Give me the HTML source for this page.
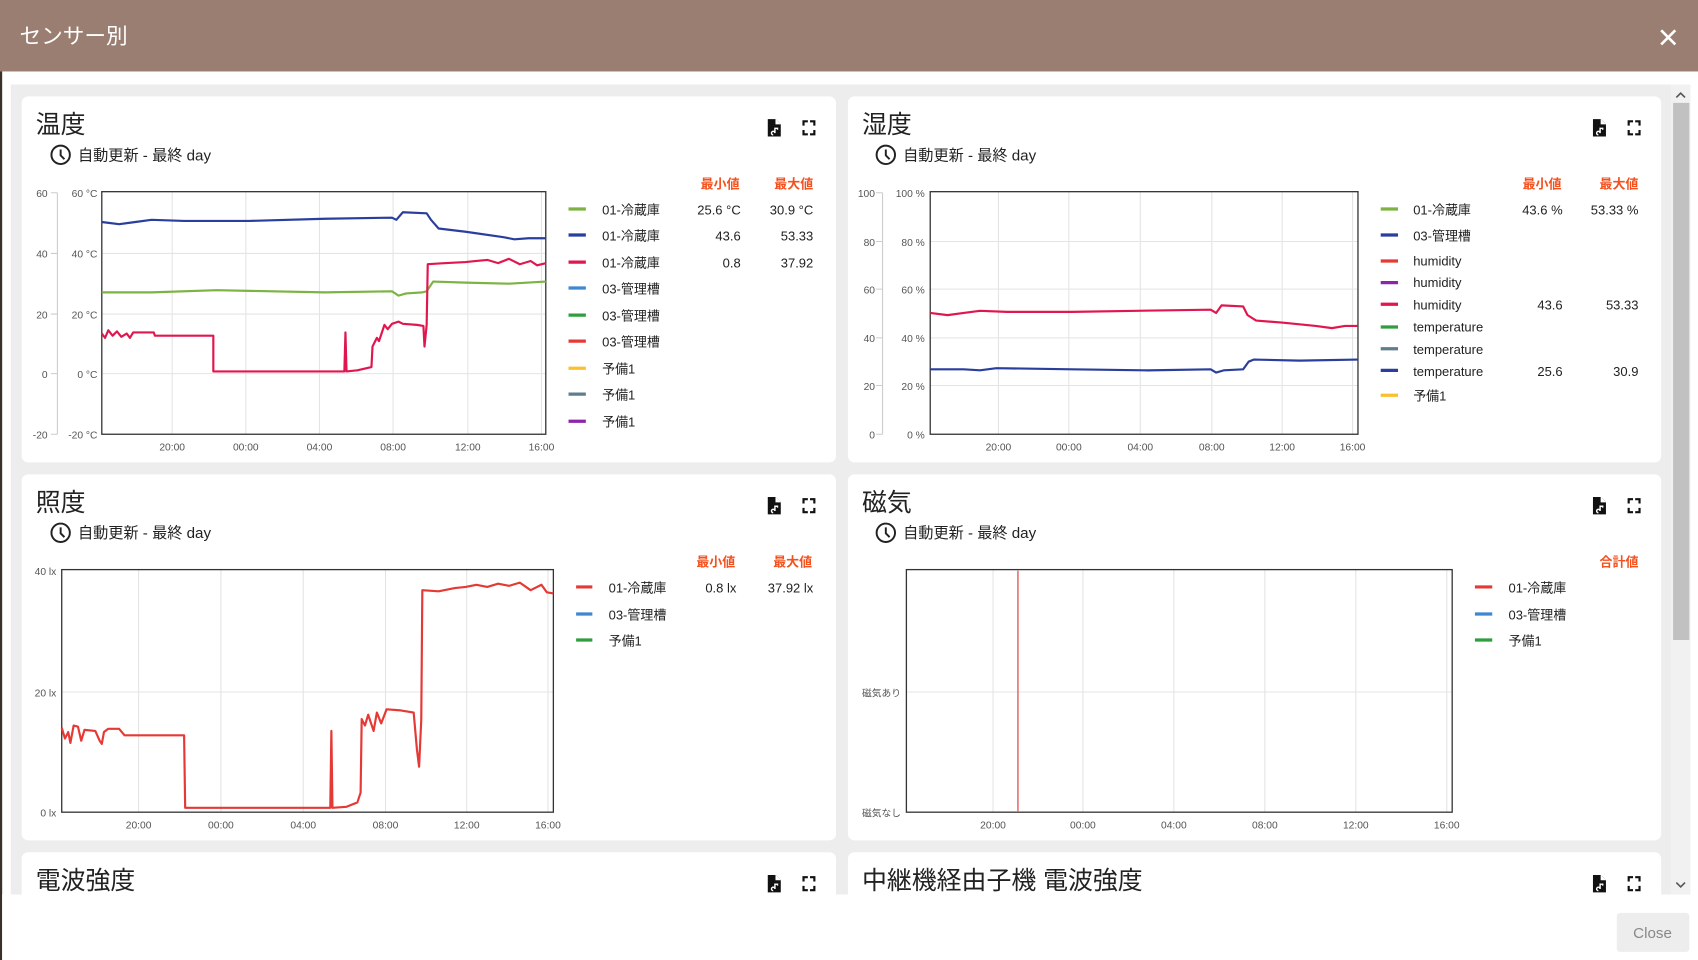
<!DOCTYPE html>
<html><head><meta charset="utf-8"><style>
html,body{margin:0;padding:0;background:#fff;overflow:hidden}
svg{display:block}
text{font-family:"Liberation Sans","Noto Sans CJK JP",sans-serif}
.ttl{font-size:23px;fill:#222}
.sub{font-size:14px;fill:#222}
.ax{font-size:9.5px;fill:#555}
.lg{font-size:12px;fill:#222}
.lh{font-size:12px;fill:#f4511e;font-weight:bold}
.grid{stroke:#e4e4e4;stroke-width:1;fill:none}
</style></head><body>
<svg width="1698" height="960" viewBox="0 0 1568 886.5" xmlns="http://www.w3.org/2000/svg">
<defs>
<g id="clk"><circle cx="0" cy="0" r="8.5" fill="none" stroke="#222" stroke-width="1.8"/><path d="M0 -5V0.5L3.5 4" fill="none" stroke="#222" stroke-width="1.8"/></g>
<g id="ico"><path d="M-6 -8H1.5L6 -3.5V8H-6Z" fill="#111"/><path d="M1.5 -8V-3.5H6" fill="#fff" stroke="#fff" stroke-width="0.8"/><path d="M-1 6.5 A1.6 1.6 0 1 1 0.6 4.9V0.5H3V1.8" fill="none" stroke="#fff" stroke-width="1.3"/>
<path d="M27 -2V-6H31M33 -6H37V-2M37 2V6H33M31 6H27V2" fill="none" stroke="#111" stroke-width="2"/></g>
</defs>
<rect width="1568" height="887" fill="#fff"/>
<rect width="1568" height="66" fill="#9a7e71"/>
<text x="18" y="40" style="font-size:20px;fill:#fff">センサー別</text>
<path d="M1534 28L1547 41M1547 28L1534 41" stroke="#fff" stroke-width="2.4"/>
<rect x="10" y="78" width="1533" height="748" fill="#ededed"/>
<rect x="1543" y="78" width="18" height="748" fill="#f1f1f1"/>
<rect x="1545" y="95" width="15" height="496" fill="#c1c1c1"/>
<path d="M1548 90L1552 86L1556 90" stroke="#555" stroke-width="1.5" fill="none"/>
<path d="M1548 815L1552 819L1556 815" stroke="#555" stroke-width="1.5" fill="none"/>
<rect x="0" y="66" width="2" height="821" fill="#3b2f2a"/>

<rect x="20" y="89" width="752" height="338" rx="6" fill="#fff"/>
<rect x="783" y="89" width="751" height="338" rx="6" fill="#fff"/>
<rect x="20" y="438" width="752" height="338" rx="6" fill="#fff"/>
<rect x="783" y="438" width="751" height="338" rx="6" fill="#fff"/>
<rect x="20" y="787" width="752" height="50" rx="6" fill="#fff"/>
<rect x="783" y="787" width="751" height="50" rx="6" fill="#fff"/>

<text x="33" y="123" class="ttl">温度</text>
<use href="#clk" x="56" y="143"/><text x="72" y="148" class="sub">自動更新 - 最終 day</text>
<use href="#ico" x="715" y="118"/>
<g class="grid"><path d="M94 234H504M94 290H504M94 345H504M159 177V401M227 177V401M295 177V401M363 177V401M432 177V401M500 177V401"/></g>
<path d="M53 178V401M47 178H53M47 234H53M47 290H53M47 345H53M47 401H53" stroke="#ccc" fill="none"/>
<rect x="94" y="177" width="410" height="224" fill="none" stroke="#333" stroke-width="1.2"/>
<g class="ax" text-anchor="end"><text x="44" y="182">60</text><text x="44" y="238">40</text><text x="44" y="294">20</text><text x="44" y="349">0</text><text x="44" y="405">-20</text>
<text x="90" y="182">60 °C</text><text x="90" y="238">40 °C</text><text x="90" y="294">20 °C</text><text x="90" y="349">0 °C</text><text x="90" y="405">-20 °C</text></g>
<g class="ax" text-anchor="middle"><text x="159" y="416">20:00</text><text x="227" y="416">00:00</text><text x="295" y="416">04:00</text><text x="363" y="416">08:00</text><text x="432" y="416">12:00</text><text x="500" y="416">16:00</text></g>
<g fill="none" stroke-width="2" stroke-linejoin="round">
<path stroke="#2a3f9d" d="M94 205L110 207L125 205L140 203L170 204L230 204L300 202L362 201L366 203L372 196L394 197L398 203L405 211L430 214L465 219L475 221L488 220L504 220"/>
<path stroke="#7cb342" d="M94 270L140 270L200 268L300 270L362 269L368 273L375 271L390 270L394 269L400 260L430 261L470 262L504 260"/>
<path stroke="#e0174f" d="M94 308L97 312L100 305L104 310L108 306L112 311L117 308L120 312L123 307L128 307L142 307L143 310L197 310L197 343L318 343L319 307L320 343L330 342L343 339L344 320L348 312L350 315L355 300L358 304L362 299L368 297L372 299L385 300L391 301L392 320L394 300L395 244L410 243L430 242L440 241L450 240L460 243L470 239L480 244L490 241L496 245L504 243"/>
</g>
<text x="665" y="174" class="lh" text-anchor="middle">最小値</text><text x="733" y="174" class="lh" text-anchor="middle">最大値</text>
<g stroke-width="3"><path d="M525 193H541" stroke="#7cb342"/><path d="M525 217H541" stroke="#2a3f9d"/><path d="M525 242H541" stroke="#e0174f"/><path d="M525 266H541" stroke="#3f88d0"/><path d="M525 291H541" stroke="#2e9e3f"/><path d="M525 315H541" stroke="#e53935"/><path d="M525 340H541" stroke="#fbc02d"/><path d="M525 364H541" stroke="#607d8b"/><path d="M525 389H541" stroke="#8e24aa"/></g>
<g class="lg"><text x="556" y="198">01-冷蔵庫</text><text x="556" y="222">01-冷蔵庫</text><text x="556" y="247">01-冷蔵庫</text><text x="556" y="271">03-管理槽</text><text x="556" y="296">03-管理槽</text><text x="556" y="320">03-管理槽</text><text x="556" y="345">予備1</text><text x="556" y="369">予備1</text><text x="556" y="394">予備1</text></g>
<g class="lg" text-anchor="end"><text x="684" y="198">25.6 °C</text><text x="751" y="198">30.9 °C</text><text x="684" y="222">43.6</text><text x="751" y="222">53.33</text><text x="684" y="247">0.8</text><text x="751" y="247">37.92</text></g>

<text x="796" y="123" class="ttl">湿度</text>
<use href="#clk" x="818" y="143"/><text x="834" y="148" class="sub">自動更新 - 最終 day</text>
<use href="#ico" x="1477" y="118"/>
<g class="grid"><path d="M859 223H1254M859 267H1254M859 312H1254M859 356H1254M922 177V401M987 177V401M1053 177V401M1119 177V401M1184 177V401M1249 177V401"/></g>
<path d="M815 178V401M809 178H815M809 223H815M809 267H815M809 312H815M809 356H815M809 401H815" stroke="#ccc" fill="none"/>
<rect x="859" y="177" width="395" height="224" fill="none" stroke="#333" stroke-width="1.2"/>
<g class="ax" text-anchor="end"><text x="808" y="182">100</text><text x="808" y="227">80</text><text x="808" y="271">60</text><text x="808" y="316">40</text><text x="808" y="360">20</text><text x="808" y="405">0</text>
<text x="854" y="182">100 %</text><text x="854" y="227">80 %</text><text x="854" y="271">60 %</text><text x="854" y="316">40 %</text><text x="854" y="360">20 %</text><text x="854" y="405">0 %</text></g>
<g class="ax" text-anchor="middle"><text x="922" y="416">20:00</text><text x="987" y="416">00:00</text><text x="1053" y="416">04:00</text><text x="1119" y="416">08:00</text><text x="1184" y="416">12:00</text><text x="1249" y="416">16:00</text></g>
<g fill="none" stroke-width="2" stroke-linejoin="round">
<path stroke="#e0174f" d="M859 289L875 291L890 289L905 287L930 288L990 288L1050 287L1118 286L1123 289L1128 282L1148 283L1152 291L1160 296L1185 298L1215 301L1230 303L1242 301L1254 301"/>
<path stroke="#2a3f9d" d="M859 341L890 341L905 342L920 340L990 341L1060 342L1118 341L1123 344L1130 342L1148 341L1153 334L1158 332L1200 333L1254 332"/>
</g>
<text x="1424" y="174" class="lh" text-anchor="middle">最小値</text><text x="1495" y="174" class="lh" text-anchor="middle">最大値</text>
<g stroke-width="3"><path d="M1275 193H1291" stroke="#7cb342"/><path d="M1275 217H1291" stroke="#2a3f9d"/><path d="M1275 241H1291" stroke="#e53935"/><path d="M1275 261H1291" stroke="#8e24aa"/><path d="M1275 281H1291" stroke="#e0174f"/><path d="M1275 302H1291" stroke="#2e9e3f"/><path d="M1275 322H1291" stroke="#607d8b"/><path d="M1275 342H1291" stroke="#2a3f9d"/><path d="M1275 365H1291" stroke="#fbc02d"/></g>
<g class="lg"><text x="1305" y="198">01-冷蔵庫</text><text x="1305" y="222">03-管理槽</text><text x="1305" y="245">humidity</text><text x="1305" y="265">humidity</text><text x="1305" y="286">humidity</text><text x="1305" y="306">temperature</text><text x="1305" y="327">temperature</text><text x="1305" y="347">temperature</text><text x="1305" y="370">予備1</text></g>
<g class="lg" text-anchor="end"><text x="1443" y="198">43.6 %</text><text x="1513" y="198">53.33 %</text><text x="1443" y="286">43.6</text><text x="1513" y="286">53.33</text><text x="1443" y="347">25.6</text><text x="1513" y="347">30.9</text></g>

<text x="33" y="472" class="ttl">照度</text>
<use href="#clk" x="56" y="492"/><text x="72" y="497" class="sub">自動更新 - 最終 day</text>
<use href="#ico" x="715" y="467"/>
<g class="grid"><path d="M57 639H511M128 526V750M204 526V750M280 526V750M356 526V750M431 526V750M506 526V750"/></g>
<rect x="57" y="526" width="454" height="224" fill="none" stroke="#333" stroke-width="1.2"/>
<g class="ax" text-anchor="end"><text x="52" y="531">40 lx</text><text x="52" y="643">20 lx</text><text x="52" y="754">0 lx</text></g>
<g class="ax" text-anchor="middle"><text x="128" y="765">20:00</text><text x="204" y="765">00:00</text><text x="280" y="765">04:00</text><text x="356" y="765">08:00</text><text x="431" y="765">12:00</text><text x="506" y="765">16:00</text></g>
<path fill="none" stroke="#e53935" stroke-width="2" stroke-linejoin="round" d="M57 672L60 682L63 676L65 686L68 670L72 671L75 684L78 674L88 675L92 684L94 687L96 676L100 673L110 673L115 679L170 679L171 746L305 746L306 675L307 746L320 745L330 741L333 732L334 664L337 670L340 660L345 675L348 658L352 668L357 655L370 656L382 658L385 692L387 708L389 665L390 545L405 546L420 543L430 542L440 540L450 542L460 539L470 541L480 538L490 545L500 540L505 547L511 548"/>
<text x="661" y="523" class="lh" text-anchor="middle">最小値</text><text x="732" y="523" class="lh" text-anchor="middle">最大値</text>
<g stroke-width="3"><path d="M532 542H547" stroke="#e53935"/><path d="M532 567H547" stroke="#3f88d0"/><path d="M532 591H547" stroke="#2e9e3f"/></g>
<g class="lg"><text x="562" y="547">01-冷蔵庫</text><text x="562" y="572">03-管理槽</text><text x="562" y="596">予備1</text></g>
<g class="lg" text-anchor="end"><text x="680" y="547">0.8 lx</text><text x="751" y="547">37.92 lx</text></g>

<text x="796" y="472" class="ttl">磁気</text>
<use href="#clk" x="818" y="492"/><text x="834" y="497" class="sub">自動更新 - 最終 day</text>
<use href="#ico" x="1477" y="467"/>
<g class="grid"><path d="M837 639H1341M917 526V750M1000 526V750M1084 526V750M1168 526V750M1252 526V750M1336 526V750"/></g>
<rect x="837" y="526" width="504" height="224" fill="none" stroke="#333" stroke-width="1.2"/>
<path d="M940 527V749" stroke="#e57373" stroke-width="1.5"/>
<g class="ax" style="font-size:9px" text-anchor="end"><text x="832" y="643">磁気あり</text><text x="832" y="754">磁気なし</text></g>
<g class="ax" text-anchor="middle"><text x="917" y="765">20:00</text><text x="1000" y="765">00:00</text><text x="1084" y="765">04:00</text><text x="1168" y="765">08:00</text><text x="1252" y="765">12:00</text><text x="1336" y="765">16:00</text></g>
<text x="1513" y="523" class="lh" text-anchor="end">合計値</text>
<g stroke-width="3"><path d="M1362 542H1378" stroke="#e53935"/><path d="M1362 567H1378" stroke="#3f88d0"/><path d="M1362 591H1378" stroke="#2e9e3f"/></g>
<g class="lg"><text x="1393" y="547">01-冷蔵庫</text><text x="1393" y="572">03-管理槽</text><text x="1393" y="596">予備1</text></g>

<text x="33" y="821" class="ttl">電波強度</text>
<use href="#ico" x="715" y="816"/>
<text x="796" y="821" class="ttl">中継機経由子機 電波強度</text>
<use href="#ico" x="1477" y="816"/>

<rect x="2" y="826" width="1566" height="61" fill="#fff"/>
<rect x="1493" y="843" width="67" height="36" rx="3" fill="#ededed"/>
<text x="1526" y="866" text-anchor="middle" style="font-size:14px;fill:#888">Close</text>
</svg>
</body></html>
